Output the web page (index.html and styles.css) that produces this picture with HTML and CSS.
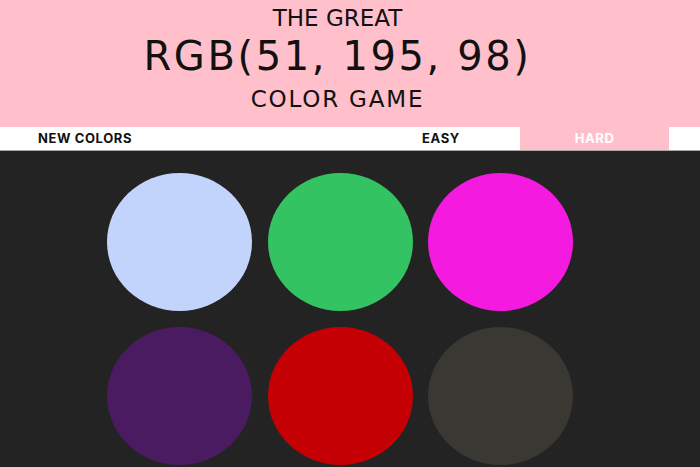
FILE: index.html
```html
<!DOCTYPE html>
<html lang="en">
<head>
<meta charset="utf-8">
<title>The Great RGB Color Game</title>
<link rel="stylesheet" href="styles.css">
</head>
<body>
  <header class="header">
    <h1 class="title">
      <span class="title-small">THE GREAT</span>
      <span class="title-rgb">RGB(51, 195, 98)</span>
      <span class="title-small title-last">COLOR GAME</span>
    </h1>
  </header>
  <nav class="stripe">
    <button class="btn btn-new">NEW COLORS</button>
    <button class="btn btn-easy">EASY</button>
    <button class="btn btn-hard">HARD</button>
  </nav>
  <main class="board">
    <div class="grid">
      <div class="square sq-blue"></div>
      <div class="square sq-green"></div>
      <div class="square sq-magenta"></div>
      <div class="square sq-purple"></div>
      <div class="square sq-red"></div>
      <div class="square sq-gray"></div>
    </div>
  </main>
</body>
</html>
```
FILE: styles.css
```css
* { box-sizing: border-box; }
html, body {
  margin: 0;
  padding: 0;
  height: 100%;
  overflow: hidden;
}
body {
  background: #232323;
  font-family: "DejaVu Sans", Lato, sans-serif;
}
.header {
  background: #ffc0cb;
  height: 127px;
  padding: 3px 25px 0 0;
}
.title {
  margin: 0;
  font-weight: 400;
  color: #111;
  text-align: center;
}
.title-small {
  display: block;
  font-size: 23px;
  line-height: 30px;
}
.title-rgb {
  display: block;
  font-size: 40px;
  line-height: 46px;
  letter-spacing: 2.6px;
}
.title-last {
  line-height: 40px;
  letter-spacing: 1.8px;
}
.stripe {
  display: flex;
  background: #fff;
  height: 24px;
  border-bottom: 1px solid #a9a9a9;
  padding-right: 31px;
}
.btn {
  border: none;
  background: #fff;
  font-family: Inter, "Liberation Sans", sans-serif;
  font-weight: 700;
  font-size: 13px;
  letter-spacing: 0.6px;
  color: #111;
  padding: 0;
  height: 23px;
  line-height: 23px;
}
.btn-new {
  margin-left: 38px;
  margin-right: auto;
  text-align: left;
}
.btn-easy {
  width: 150px;
  margin-right: 4px;
}
.btn-hard {
  width: 149px;
  background: #ffc0cb;
  color: #fff;
}
.board {
  padding: 22px 20px 0 0;
}
.grid {
  width: 466px;
  margin: 0 auto;
  display: grid;
  grid-template-columns: repeat(3, 145px);
  column-gap: 15.5px;
  row-gap: 16px;
}
.square {
  height: 138px;
  border-radius: 50%;
}
.sq-blue { background: #c3d4fc; }
.sq-green { background: rgb(51, 195, 98); }
.sq-magenta { background: #f41ae0; }
.sq-purple { background: #4b1b62; }
.sq-red { background: #c40005; }
.sq-gray { background: #3a3833; }
```
